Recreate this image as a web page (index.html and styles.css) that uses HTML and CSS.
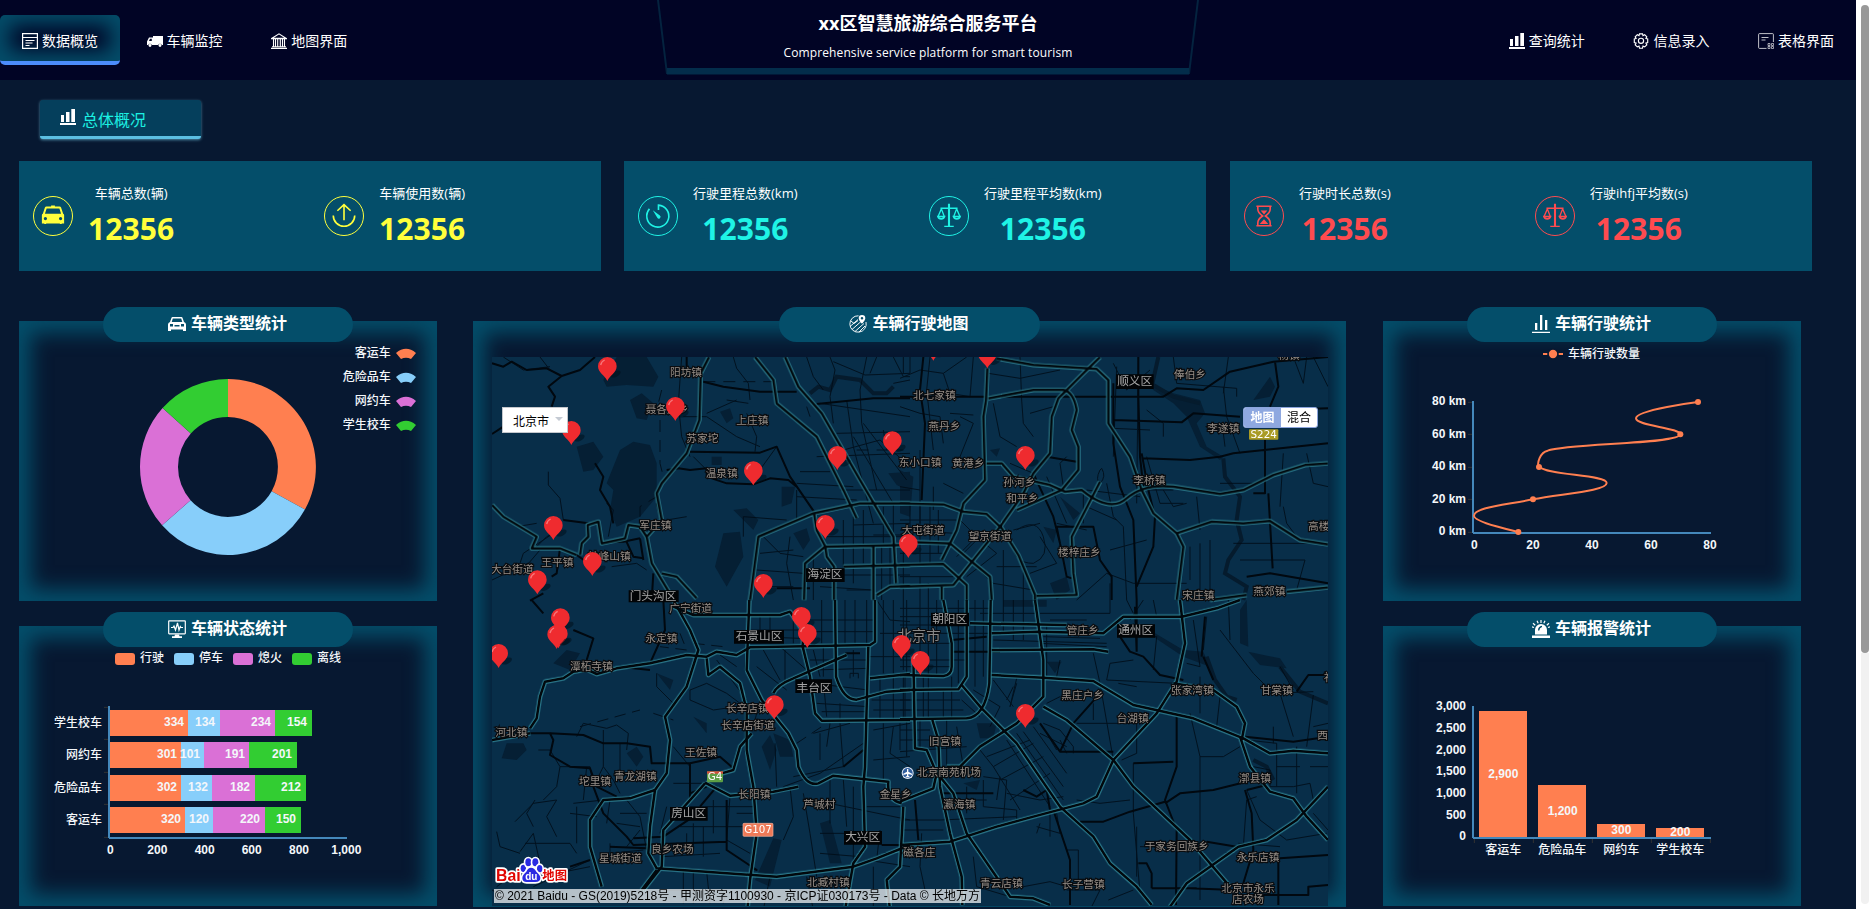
FILE: index.html
```html
<!DOCTYPE html>
<html lang="zh-CN">
<head>
<meta charset="utf-8">
<title>xx区智慧旅游综合服务平台</title>
<link rel="stylesheet" href="styles.css">
</head>
<body>
<svg class="defs" aria-hidden="true">
  <symbol id="i-bars" viewBox="0 0 16 16"><path fill="currentColor" d="M0 14h16v2H0zM1 6h3v7H1zM6 3h3.500v10H6zM11.300 0H15v13h-3.700z"/></symbol>
  <symbol id="i-doc" viewBox="0 0 16 16"><path fill="none" stroke="currentColor" stroke-width="1.200" d="M.6.600h14.800v14.800H.6zM.6 4.500h14.800M3.500 7.500h9M3.500 10h7M3.500 12.500h4"/></symbol>
  <symbol id="i-truck" viewBox="0 0 16 16"><path fill="currentColor" d="M6 3h10v9h-1.200a2 2 0 0 0-3.600 0H4.800a2 2 0 0 0-3.600 0H0V8.500L2 4.500h4zM2 8h2.800V5.700H3z" fill-rule="evenodd"/><circle cx="3" cy="12.500" r="1.400" fill="currentColor"/><circle cx="13" cy="12.500" r="1.400" fill="currentColor"/></symbol>
  <symbol id="i-museum" viewBox="0 0 16 16"><path fill="none" stroke="currentColor" stroke-width="1.100" d="M1 5.200 8 .8l7 4.400zM0 5.700h16M0 15.400h16M1 13.800h14M2.500 6v8M4.500 6v8M6.700 6v8M9.300 6v8M11.500 6v8M13.500 6v8"/></symbol>
  <symbol id="i-gear" viewBox="0 0 16 16"><g fill="none" stroke="currentColor" stroke-width="1.150"><path d="M6.500.8h3l.5 1.800 1.700-.9 2.100 2.100-.9 1.700 1.800.5v3.500l-1.800.6.9 1.700-2.100 2.100-1.700-.9-.5 2.200h-3L6 13l-1.700.9-2.100-2.100.9-1.700L1.300 9.500V6l1.800-.5-.9-1.700 2.100-2.100 1.700.9z"/><circle cx="8" cy="7.800" r="2.600"/></g></symbol>
  <symbol id="i-form" viewBox="0 0 16 16"><path fill="none" stroke="currentColor" opacity=".75" d="M8.500 15.400H1.500q-.9 0-.9-.9V1.500q0-.9.900-.9h13q.9 0 .9.900V9M3.500 4.500h7M3.500 7h4"/><path fill="none" stroke="currentColor" opacity=".6" d="M10 10.500h2v2h-2zM13.500 10.500h2v2h-2zM10 13.500h2v2h-2zM13.500 13.500h2v2h-2z"/></symbol>
  <symbol id="i-car" viewBox="0 0 18 16"><path fill="currentColor" fill-rule="evenodd" d="M4.500 1h9Q14.300 1 14.600 2L16 6q2 .6 2 2.500V15h-3v-1.500H3V15H0V8.500Q0 6.600 2 6L3.400 2Q3.700 1 4.500 1zM4.800 2.500 3.700 6h10.600l-1.100-3.500zM2 8v2.500h3V8zM13 8v2.500h3V8zM6.500 9v1.500h5V9z"/></symbol>
  <symbol id="i-monitor" viewBox="0 0 18 18"><path fill="none" stroke="currentColor" stroke-width="1.200" d="M1.200.8h15.600q.5 0 .5.500v12q0 .5-.5.500H1.200q-.5 0-.5-.5v-12q0-.5.500-.5zM3 7.500h2l1-1.500 1.500 4 2-7 1.500 7 1.300-3.500L13 7.500h2"/><path fill="currentColor" d="M7 14.500h4l.5 1.700h2.500V18H4v-1.800h2.500z"/></symbol>
  <symbol id="i-route" viewBox="0 0 18 18"><g fill="none" stroke="currentColor" stroke-width=".95"><path d="M9.500.8A8.200 8.200 0 1 0 17 7"/><path d="m2 6 3 2.500 4-3M1 11.500l8-7M3 14.500l9-8M6 16.500l9-8M10 17l6-6"/></g><path fill="currentColor" fill-rule="evenodd" d="M13 0a3.300 3.300 0 0 1 3.300 3.300C16.300 5.500 13 8.800 13 8.800S9.700 5.500 9.700 3.300A3.300 3.300 0 0 1 13 0zm0 2a1.300 1.300 0 1 0 0 2.600A1.300 1.300 0 0 0 13 2z"/></symbol>
  <symbol id="i-chart" viewBox="0 0 18 18"><path fill="currentColor" d="M0 16.800h18V18H0zM3 8h2.300v7H3zM8 0h2.300v15H8zM13 5h2.300v10H13z"/></symbol>
  <symbol id="i-siren" viewBox="0 0 18 18"><path fill="currentColor" fill-rule="evenodd" d="M0 15.500h18V18H0zM3 14.500V10a6 6 0 0 1 12 0v4.500zm3-4h1.300Q7.500 7.500 10 7V5.800Q6 6.300 6 10.500z"/><path stroke="currentColor" stroke-width="1.200" d="M9 0v3M5 .8l1.200 2.500M13 .8l-1.200 2.500M1 3.200l2.200 2M17 3.200l-2.200 2M0 6.800l2 .7M18 6.800l-2 .7"/></symbol>
  <symbol id="r-car" viewBox="0 0 40 40"><path fill="currentColor" fill-rule="evenodd" d="M13 10h5V9h4v1h5q1 0 1.500 1l2.200 6.500q1 .5 1 1.500v9h-2.500v.5h-2V28H12.800v.5h-2V28H8.300v-9q0-1 1-1.500L11.500 11Q12 10 13 10zm.3 2-1.800 5.500h17L26.700 12zM12 21a1.700 1.700 0 1 0 0 3.400A1.700 1.700 0 0 0 12 21zm16 0a1.700 1.700 0 1 0 0 3.400A1.700 1.700 0 0 0 28 21z"/></symbol>
  <symbol id="r-up" viewBox="0 0 40 40"><path fill="none" stroke="currentColor" stroke-width="1.700" d="M20 24.500V8.500M13 14.500l7-6.500 7 6.500M8.700 19.500a11.300 11.300 0 1 0 22.600 0"/></symbol>
  <symbol id="r-clock" viewBox="0 0 40 40"><path fill="none" stroke="currentColor" stroke-width="1.700" d="M11 12.500A11.600 11.600 0 1 0 20.500 8.500v5.300"/><path fill="currentColor" d="m14.500 14 7.500 5.500a1.800 1.800 0 1 1-2.700 2.300z"/></symbol>
  <symbol id="r-scale" viewBox="0 0 40 40"><g fill="none" stroke="currentColor"><path stroke-width="2.200" d="M20 7v24"/><path stroke-width="1.400" d="M11 11.800h18M15 31h10M12 12.500l-3.500 8M12 12.500l3 8M28 12.500l-3 8M28 12.500l3.500 8"/><path stroke-width="1.700" d="M8.300 20.500q.7 2.500 3.500 2.500t3.500-2.500zM24.700 20.500q.7 2.500 3.500 2.500t3.500-2.500z"/></g></symbol>
  <symbol id="r-hour" viewBox="0 0 40 40"><path fill="none" stroke="currentColor" stroke-width="1.700" d="M12 9.800h16M12 30.200h16M13.500 10v3q0 3.500 5 7-5 3.500-5 7v3M26.500 10v3q0 3.500-5 7 5 3.500 5 7v3"/><path fill="currentColor" d="M16.500 14.300h7L20 18.500zM20 23.500l4.500 5h-9z"/></symbol>
  <g id="pin"><ellipse cx="24" cy="-20" rx="17" ry="9" fill="#00101c" opacity=".55" transform="rotate(-25 24 -20)"/><path fill="#ef2b2f" d="M0 1C-7-15-28-24-28-43A28 28 0 0 1 28-43C28-24 7-15 0 1Z"/><path fill="none" stroke="#f7777a" stroke-width="4" d="M-20-47A21 21 0 0 1-8-62"/></g>
</svg>

<div class="shell">
  <main class="page">
    <header class="top">
      <nav class="nav">
        <a class="nav-item active"><svg><use href="#i-doc"/></svg>数据概览</a>
        <a class="nav-item"><svg><use href="#i-truck"/></svg>车辆监控</a>
        <a class="nav-item"><svg><use href="#i-museum"/></svg>地图界面</a>
      </nav>
      <div class="brand">
        <svg class="brand-frame" viewBox="0 0 548 80"><path class="frame-side" d="M4 0 13 74M544 0l-9 74"/><path class="frame-base" d="M13 68H535V74.500H13z"/></svg>
        <h1>xx区智慧旅游综合服务平台</h1>
        <p>Comprehensive service platform for smart tourism</p>
      </div>
      <nav class="nav right">
        <a class="nav-item"><svg><use href="#i-bars"/></svg>查询统计</a>
        <a class="nav-item"><svg><use href="#i-gear"/></svg>信息录入</a>
        <a class="nav-item"><svg><use href="#i-form"/></svg>表格界面</a>
      </nav>
    </header>

    <div class="section-tab"><svg><use href="#i-bars"/></svg>总体概况</div>

    <section class="stats">
      <div class="card yellow">
        <div class="stat"><svg class="round"><use href="#r-car"/></svg><div class="info"><span>车辆总数(辆)</span><b>12356</b></div></div>
        <div class="stat"><svg class="round"><use href="#r-up"/></svg><div class="info"><span>车辆使用数(辆)</span><b>12356</b></div></div>
      </div>
      <div class="card cyan">
        <div class="stat"><svg class="round"><use href="#r-clock"/></svg><div class="info"><span>行驶里程总数(km)</span><b>12356</b></div></div>
        <div class="stat"><svg class="round"><use href="#r-scale"/></svg><div class="info"><span>行驶里程平均数(km)</span><b>12356</b></div></div>
      </div>
      <div class="card red">
        <div class="stat"><svg class="round"><use href="#r-hour"/></svg><div class="info"><span>行驶时长总数(s)</span><b>12356</b></div></div>
        <div class="stat"><svg class="round"><use href="#r-scale"/></svg><div class="info"><span>行驶ihfj平均数(s)</span><b>12356</b></div></div>
      </div>
    </section>

    <section class="board">
      <div class="column">
        <article class="panel">
          <h2 class="pill"><svg><use href="#i-car"/></svg>车辆类型统计</h2>
          <svg class="chart" viewBox="57 93 1254 840">
            <path fill="#ff7f50" d="M684 267A264 264 0 0 1 914.800 658.600L815 603.500A150 150 0 0 0 684 381Z"/>
            <path fill="#87cefa" d="M914.800 658.600A264 264 0 0 1 486.300 705.900L571.700 630.400A150 150 0 0 0 815 603.500Z"/>
            <path fill="#da70d6" d="M486.300 705.900A264 264 0 0 1 487.800 354.300L572.500 430.600A150 150 0 0 0 571.700 630.400Z"/>
            <path fill="#32cd32" d="M487.800 354.300A264 264 0 0 1 684 267V381A150 150 0 0 0 572.500 430.600Z"/>
            <g class="end">
              <text x="1172" y="202">客运车</text><text x="1172" y="274">危险品车</text><text x="1172" y="346">网约车</text><text x="1172" y="418">学生校车</text>
            </g>
            <path fill="#ff7f50" d="M1188 189q30-25 60 0l-15 18q-15-8-30 0z"/>
            <path fill="#87cefa" d="M1188 261q30-25 60 0l-15 18q-15-8-30 0z"/>
            <path fill="#da70d6" d="M1188 333q30-25 60 0l-15 18q-15-8-30 0z"/>
            <path fill="#32cd32" d="M1188 405q30-25 60 0l-15 18q-15-8-30 0z"/>
          </svg>
        </article>
        <article class="panel">
          <h2 class="pill"><svg><use href="#i-monitor"/></svg>车辆状态统计</h2>
          <svg class="chart" viewBox="57 78 1254 840">
            <g><rect x="345" y="159" width="60" height="36" rx="9" fill="#ff7f50"/><rect x="522" y="159" width="60" height="36" rx="9" fill="#87cefa"/><rect x="699" y="159" width="60" height="36" rx="9" fill="#da70d6"/><rect x="876" y="159" width="60" height="36" rx="9" fill="#32cd32"/></g>
            <text x="420" y="187">行驶</text><text x="597" y="187">停车</text><text x="774" y="187">熄火</text><text x="951" y="187">离线</text>
            <path class="tick" d="M312 322h15M312 418h15M312 517h15M312 613h15M312 712h15"/>
            <path fill="#ff7f50" d="M330 330h234v78H330zM330 426h213v78H330zM330 525h213v78H330zM330 621h225v78H330z"/>
            <path fill="#87cefa" d="M564 330h96v78h-96zM543 426h69v78h-69zM543 525h93v78h-93zM555 621h84v78h-84z"/>
            <path fill="#da70d6" d="M660 330h165v78H660zM612 426h135v78H612zM636 525h129v78H636zM639 621h156v78H639z"/>
            <path fill="#32cd32" d="M825 330h111v78H825zM747 426h144v78H747zM765 525h153v78H765zM795 621h108v78H795z"/>
            <path class="axis" d="M327 318V714M327 714H1041"/>
            <g class="end"><text x="306" y="382">学生校车</text><text x="306" y="478">网约车</text><text x="306" y="577">危险品车</text><text x="306" y="673">客运车</text></g>
            <g class="end num"><text x="552" y="378">334</text><text x="645" y="378">134</text><text x="813" y="378">234</text><text x="921" y="378">154</text>
            <text x="531" y="474">301</text><text x="600" y="474">101</text><text x="735" y="474">191</text><text x="876" y="474">201</text>
            <text x="531" y="573">302</text><text x="624" y="573">132</text><text x="750" y="573">182</text><text x="903" y="573">212</text>
            <text x="543" y="669">320</text><text x="627" y="669">120</text><text x="780" y="669">220</text><text x="888" y="669">150</text></g>
            <g class="mid num"><text x="331" y="762">0</text><text x="472" y="762">200</text><text x="614" y="762">400</text><text x="755" y="762">600</text><text x="897" y="762">800</text><text x="1039" y="762">1,000</text></g>
          </svg>
        </article>
      </div>

      <article class="panel map-panel">
        <h2 class="pill"><svg><use href="#i-route"/></svg>车辆行驶地图</h2>
        <div class="map">
          <svg class="map-canvas" viewBox="0 0 2508 1647">
            <defs>
              <g id="highways">
                <g transform="translate(-96 -201)">
                  <path d="M747 201 722 250 718 390 680 490 605 580 590 610 605 690 560 740 575 820 620 895 642 932"/>
                  <path d="M885 201 940 270 950 340 1070 440 1150 600 1190 685M975 201 1015 290 1085 370 1200 570 1300 740 1308 880"/>
                  <path d="M96 645 130 680 230 740 215 775 300 775 350 795M360 795 365 760 385 740 383 705 415 695 425 760 495 745 505 705 540 710 560 740"/>
                  <path d="M870 930 895 740 1060 670 1200 640 1350 640M1032 930 1035 820 1095 770 1350 765M1150 830 1350 825M1240 770V930M1122 930V880M1250 915 1290 890 1350 888M605 850 650 860 710 925M1062 670 1070 720 1096 770 1100 800 1122 830V880"/>
                </g>
                <g transform="translate(1224 -201)">
                  <path d="M290 205 400 225 590 237 625 270V400L690 500 725 600 760 670 830 730 850 770 830 930"/>
                  <path d="M600 201 550 250 500 300 475 325 455 380 450 490 400 550 370 610 300 710 160 885 0 890"/>
                  <path d="M265 325 400 300 490 300Q520 305 530 360L515 420 535 470V540L485 600 350 660M262 235 258 330 250 380 255 570 190 640 170 720 125 810"/>
                  <path d="M0 640 130 643 190 665 260 672 305 715 355 795 405 915V930M0 755 150 760 215 815 270 860 275 930M0 825 130 822 200 885V930M125 930V890"/>
                  <path d="M260 520H305L340 560 450 585 495 605 545 600Q630 670 680 625T820 590L960 612 1030 600 1120 555 1215 525 1284 520"/>
                  <path d="M600 575 515 740 520 850 530 915 410 918M830 730 935 695 1030 700 1110 693 1200 750 1284 763M930 930 1040 915M1160 905 1284 892"/>
                </g>
                <g transform="translate(-96 729)">
                  <path d="M640 0 690 90 715 150 680 260 615 350 630 420 620 520 585 570 570 680 565 760 590 805 950 830 1180 800 1250 775 1350 735"/>
                  <path d="M210 385 230 355 240 290 255 245 310 235 340 215 380 208 410 222 470 205 570 190 680 165 740 170 770 155 830 165 870 142 1230 135 1245 125V0M96 420 210 400"/>
                  <path d="M640 20 700 45 960 45 990 35 1030 95 1028 140 1050 230 1065 340 1085 362 1350 360"/>
                  <path d="M868 0 860 210 905 300 985 400 1010 450 1015 500Q1040 560 1075 550L1120 527 1285 545Q1280 600 1325 610M1125 0 1128 230Q1150 300 1190 299L1280 275 1350 270"/>
                  <path d="M1225 140 1215 500 1210 560 1215 740 1180 790 1155 930M1230 235 1350 222M740 175 745 225 780 200 840 250 860 330 860 450 880 560 890 700 870 840 862 930"/>
                  <path d="M875 400 840 440 820 510 785 520M585 570 510 595 430 600 390 660 390 740 425 860M735 550 610 690 605 800 550 870M735 548 810 587 940 575 1015 560M940 280Q950 255 1000 235L1160 165M590 810 545 870M1330 620 1320 800 1280 840 1290 930"/>
                </g>
                <g transform="translate(1224 729)">
                  <path d="M840 0 855 130 830 245 770 340 640 480 590 590 550 610 400 650 290 680 150 725 0 735"/>
                  <path d="M405 0 430 180V290L350 370 240 440 180 500H140M272 0 268 250Q255 350 200 355L0 358M200 0V230L175 268 0 270M130 0 155 130V200Q155 225 130 228L0 225"/>
                  <path d="M185 255 245 325 350 430 480 620 580 710 630 790 710 860 755 915M275 225 430 233 580 243 700 315 880 355 1030 415 1110 460 1180 452 1284 460"/>
                  <path d="M430 320 500 360 640 480 700 560 870 720 990 860M580 100H610L670 50H845L950 25 1020 0M275 100 415 95 610 100M210 70 500 75M275 150 580 148 625 155"/>
                  <path d="M1020 410 1050 500 1110 575 1180 595 1220 650 1284 720M1284 560 1190 660 1100 720 1015 740 860 850 810 920M820 250 940 270 1010 320 1035 370 1025 420"/>
                  <path d="M97 360 115 420 120 560 150 700 185 830 187 915M40 170 45 445 80 450 110 520 100 565 0 605M120 530 160 580 200 700 330 890 400 895 450 915"/>
                </g>
              </g>
            </defs>
            <rect width="2508" height="1647" fill="#082e49"/>
            <g class="green">
              <g transform="translate(-96 -201)"><path d="M470 201 560 201 595 260 580 290 500 285 440 290 430 270ZM510 330 545 310 580 340 560 390 530 385ZM350 470 400 455 430 500 400 540 370 545ZM480 480 520 455 570 465 590 520 590 620 540 680 470 710 450 660 460 600 440 580ZM820 660 860 655 895 690 880 720ZM790 730 840 725 850 800 800 890 765 830ZM1000 730 1040 715 1050 750 1030 780ZM965 590h40l-10 50-30 10ZM780 365l30-10 10 30-20 15ZM755 500h30v25h-30ZM1285 550l65-5v60l-40-20Z"/></g>
              <g transform="translate(1224 -201)"><path d="M740 280 820 310 900 330 915 370 890 400 920 470 970 500 960 510 900 470 860 380 820 340 760 300ZM1060 330 1110 260 1125 290 1110 320ZM430 710 470 720 460 760ZM480 620 540 670 520 690ZM450 880 500 860 510 900 470 930ZM0 540 40 560 30 680 0 670ZM270 480 300 475 290 500Z"/></g>
              <g transform="translate(-96 729)"><path d="M280 190 320 150 360 160 330 210ZM125 475 140 430 190 430 200 450 170 480ZM500 460 530 440 550 470 530 500ZM905 440 930 405 950 450 930 510ZM940 400 990 420 1000 470 960 470ZM590 220 640 240 630 270ZM700 350 740 370 740 400ZM885 840 940 715 965 720 930 860ZM1080 670 1110 660 1145 790 1110 790Z"/></g>
              <g transform="translate(1224 729)"><path d="M740 85 850 150 910 155 930 200 850 170 760 110ZM1020 30 1040 0 1045 140 1020 130ZM1045 155 1140 175 1160 205 1080 195ZM190 550 240 540 230 570ZM230 370h60l-10 45h-40ZM440 185h45l-20 35ZM310 0h130v20H310Z"/></g>
            </g>
            <g class="water"><g transform="translate(-96 -201)"><path d="M1050 310 1075 290 1110 300 1130 260 1200 270 1240 310 1280 310 1300 290"/></g><g transform="translate(1224 -201)"><path d="M970 505 975 560 1020 620 1010 690 1025 750 985 810 975 850 1040 890 1030 930M760 285 820 320 900 340M775 201 755 290"/></g><g transform="translate(1224 729)"><path d="M920 170 945 240 980 290 1010 300M1140 200 1200 275 1284 310M1060 480 1100 500 1120 540"/></g></g>
            <g class="minor">
              <g transform="translate(-96 -201)">
                <path d="M240 201 270 240 305 258M265 545 265 585 300 625 310 690M665 201 655 340 665 440 690 500M820 201 830 235 865 280 870 330M860 370 890 440 885 485M800 330 865 340M740 370 830 330M1350 270 1300 280M1040 350 1050 380M950 470 885 560M620 690 680 680M670 380 740 380 830 440 900 470M700 500 740 540M1110 201 1125 240 1110 320 1120 400M1040 201 1060 260 1090 300M1220 201 1200 300 1205 400 1250 600M1160 330 1180 470 1240 700M1300 201 1330 260 1350 260M1080 340 1350 380M1130 430 1350 425M1070 500 1350 490M1010 580 1180 590M1010 620 1190 630M1020 545 1110 545M1010 690 1010 600M980 690 850 680 850 740M910 740 960 790 1030 800M900 790 1000 780M890 840 1030 850M905 890 1000 890M990 740 980 820 1000 930M1210 400 1340 570M1180 440 1300 640M1150 480 1260 450 1350 530M1270 420 1280 480M1250 201 1230 250M1140 600 1350 600M1300 640V760M1270 650V760M1210 660V820M1180 680V880M1150 690V840M1350 700 1180 705M1350 735 1240 735M1100 740 1350 740M1060 800V930M1080 890 1240 900M1140 855H1240M1265 770V930M1290 770V890M1330 780V930M1350 855H1240M1160 900H1240M130 201 190 240 270 230M170 710 230 700M230 770 260 740 300 720M180 820 190 790 280 730M96 870 160 840M445 740 460 660 440 640M455 830 530 820 560 840M180 850 240 780M1350 201V250L1215 255 1120 215M1330 201V250"/>
                <path d="M600 390V520L610 560M605 300 595 340M730 275H960M1190 480H1330M540 680V650L590 620" stroke-dasharray="36 24"/>
              </g>
              <g transform="translate(1224 -201)">
                <path d="M0 265 60 240 130 250 200 201M90 201 80 300 100 480M130 250 150 310 210 320 220 201M0 350 60 370 120 380 130 460M150 370 220 375M265 250 360 265 480 240M360 201 365 330 370 400 400 440M460 350 390 370M280 340 300 440 350 470M450 500 400 550 330 520M640 220 680 300 750 240M650 230 640 500M715 201 710 640M750 420 640 415M790 440 790 400 740 360M820 201 830 280M830 280 1010 295 1010 320M985 201 970 310M970 290 980 380 1020 490M1180 201 1210 280 1220 201M1240 201 1284 290M1220 490 1240 580 1284 590M1150 490 1140 650M970 430 975 470M1150 650 1160 700 1190 740M860 640 820 650 790 600M740 500 780 640 850 640M740 600H820M960 580 1060 580M890 620 900 720M900 760 900 930M1000 760 1284 760M870 770V870M930 750V930M1020 810 1215 810 1190 900M620 580 640 680 670 710 680 930M560 650 650 690M550 600V700M630 780 740 750M500 500 480 520 490 590M560 600 720 620M600 540q-15 30 0 40q20-20 5-45ZM180 380 220 400 180 500M130 580 190 610M100 590V660M60 480V700M0 590 60 600M0 690 170 690M0 720 165 730M30 640V760M60 640V820M90 650V820M115 660V790M0 790H130M60 860V930M0 860H160M85 880V930M180 690 230 740 170 800M230 740 290 790 200 860M190 790 250 730M170 780 280 880M350 720q60-40 80 20t-30 80q-60 0-60-60M280 880 400 900M290 830 410 830M310 780V930M370 820V930M340 720 420 700M420 740 470 820 390 850M440 560 500 700M470 700 560 720M530 930 620 850 700 880H860M630 880V930"/>
              </g>
              <g transform="translate(-96 729)">
                <path d="M235 450 270 450 300 500 290 560 250 600M300 500 390 500 400 560M165 665 220 610 290 600M195 730H330L350 760M110 695 120 740 180 760M180 755 220 700 240 790M430 390 430 500 460 540 480 580M350 410 370 370 440 385 470 375 505 400 500 450M430 500 400 560M480 430V510M340 610 430 600M350 620V730M290 600 260 650 290 710M225 600 200 640 220 680M330 640 410 650M500 600 540 650 560 750M640 550 740 550M620 620 600 700M590 220V260L640 310M690 270 740 250 800 280 840 310M690 270V300L760 330 830 320M640 440 690 500M690 620 880 620M810 590 800 720 870 760M660 680 850 680M680 700V750M700 670V760M730 680V770M610 770 780 760M760 600V700M830 640H880M770 180 860 300M780 165 830 200M900 300 880 380M890 200 980 270M910 150 960 240M870 90H1025M880 110 1020 115M900 50V130M930 45V130M975 150V250M1000 60V130M960 140 1040 210M1060 150 1080 230M1090 240 1100 350M1050 60H1245M1050 95H1245M1050 180H1230M1060 210 1225 205M1060 250 1225 270M1070 310 1225 320M1085 335 1225 335M1155 0V130M1185 0V130M1085 0V130M1220 0V130M1090 140V230M1180 150V230M1140 310V360M1170 235V220H1195V235M1110 370 1100 440M1060 400 1170 370M1140 370 1150 500 1000 530M1080 400V480M1210 430 1080 520 970 560M1240 390 1350 370M1270 370V550M1300 380 1290 460 1350 500M1320 370V450M1240 480 1350 470M1180 560V790M1150 540 1160 680M1110 540V670M1220 620H1320M1060 600 1350 660M1030 580 1050 700 1070 830M990 560 1000 650 970 720M945 430 950 560M1080 700H1210M1080 760 1200 770M1220 780 1350 800M1240 800V930M1260 690 1250 780M1040 830 1060 930M930 830 910 930M610 870 800 870 790 910M670 810V910M700 815V910M740 815 750 910M370 600 380 500M450 730 450 760 550 750M450 600 440 670M220 860 390 780M96 870 150 900M110 860 180 810M390 800 240 830M540 690 500 740M480 640 560 640M470 670 540 680M1225 170H1350M1250 0 1290 60 1350 65M1260 100H1350M1270 0V220M1300 0V220M1330 0V210M1235 300H1350M1240 330H1350M1260 235V360M1300 230V360M1330 220V360"/>
                <path d="M360 380 540 330M580 340 640 360M660 100 680 150 600 140M1010 430 1100 370M700 130 790 140" stroke-dasharray="34 20"/>
              </g>
              <g transform="translate(1224 729)">
                <path d="M0 25H270M0 50H200M0 75H130M0 100H270M0 130H155M0 180H200M0 200H150M20 0V225M60 0V225M85 0V360M110 0V225M175 0V250M225 0V260M250 0V230M15 225V360M70 230V360M155 230V355M130 270V355M0 300H180M0 330H190M0 390H90M0 420H100M60 360V450M20 360V470M140 360V500M170 380 190 500M0 455 200 440M185 300 240 350M220 270 300 320 270 380M280 240 340 320M330 320 350 250M350 235 330 320M240 40H405M280 70H405M310 0V100M340 0V120M370 0V120M280 120 620 130M420 40H630V0M450 60 560 60M430 110 600 115M420 130 620 140M440 70V230M470 230 480 180M580 160 600 250 640 480M620 240 630 190 700 180M620 240 830 250M700 70 680 110 770 110 760 210M680 0 700 40M730 0 690 60M760 0 770 50M880 60 900 200 860 190M920 50 910 150M985 0 990 120M960 90 1060 220 1120 280 1240 275M1140 200 1180 270M1140 280 1180 410M1240 285 1220 440M1040 420 1130 430V560M1190 440V580M1130 500H1200M1060 500 1110 510 1110 560H1180L1230 550 1240 600M1040 570 1080 660 1160 720 1280 700M900 470 970 470 1020 440M900 470V900M900 470 870 340M900 230V340M710 360V460L665 480M655 250 710 260M530 370H690M690 600 600 610 530 600M700 490V640L720 880M710 680V830M720 740 870 740M1015 730 1140 740M240 450 280 500 360 630M260 470 390 420M280 500 400 430M300 540 430 470M330 600 450 520M350 400 490 600M370 395 490 560M400 380 500 520M320 420 450 620M250 530 320 540 310 660M250 540V620L350 630M300 530 290 600M350 630V670M320 580 420 600 490 590M420 400 500 440M430 370 480 390 520 440V460M480 420 500 460M0 660 120 660 350 650M0 690 130 690M200 560V640M220 600H260M65 700 60 800 75 870M220 770 230 860 330 890M500 750H535V850M600 870 500 870M600 870 570 930M410 680 480 700 470 640M420 670 410 700M450 640V710M370 860 450 845 500 860M625 900 700 870M1070 590 1040 600 1030 740M1284 690 1240 640M1230 500 1284 500M1120 430V380M1240 380 1284 370M950 380 960 290M580 310V360M440 400 470 450M480 290 440 310M320 300 340 260"/>
              </g>
            </g>
            <g class="major">
              <g transform="translate(-96 -201)">
                <path d="M96 220 130 230 155 215 200 240 260 235 305 258 360 240 405 201M305 258 265 290 285 320 275 350M96 432 130 410M730 275 790 290 900 305 1010 305M690 485 900 488 950 470 990 560 1062 665M655 535 690 540 740 535 740 560 800 580 880 583 930 565 985 570 1010 590M1070 342 1240 325 1350 325M310 690 385 700M430 755 490 755 540 745M405 520 430 560 420 600 450 650 460 700M540 745 550 810M495 745 520 800 550 805M605 690 560 720M680 201V235M605 690 590 640M620 540 660 535M110 201M300 775 290 850 275 860M350 795 400 830 420 800M580 850 575 932M210 932 250 910M950 895H1050"/>
              </g>
              <g transform="translate(1224 -201)">
                <path d="M70 201 60 300 75 400 65 630M0 320H640M640 320H790L830 295 910 300 990 245 1120 215 1284 201M715 201V320L720 500 730 590M640 280V460L660 590 700 690 710 930M730 505 870 510 960 500 1000 490 1284 460M640 390 845 397 880 370 1020 380M1284 355 1130 360M1125 215 1135 290 1110 350M1095 450V610L1060 610M1105 610 1118 835M725 490 745 600 765 680 760 770 710 890M635 930V860L600 810 580 710 470 710M470 710 500 860 515 865M440 500 530 515M400 550 460 680 480 760M1040 860 1110 850 1284 880"/>
              </g>
              <g transform="translate(-96 729)">
                <path d="M210 400 270 400 280 420 270 465 330 500 390 505 410 560 470 590M270 400 370 405 430 430 500 430 570 440 575 490 690 490 780 470 820 505M690 490V600M400 560 430 640 500 710 520 735 800 725M520 715 610 710 700 650M800 600V750L890 810 870 800M690 580 740 560M610 0 615 90 570 190M480 200 570 210M330 800 390 780M450 740 560 745M735 550 770 560 720 620M340 90 400 115 380 180M215 0 250 40M1350 735 1265 735M1150 500 1210 450M1155 160 1200 160"/>
              </g>
              <g transform="translate(1224 729)">
                <path d="M660 110 690 155 730 170 780 225 850 240M710 155V0M910 170 940 240M830 350V500L795 600 830 690 828 915M710 155 705 20M915 50 905 170M795 610 840 580 940 570 1040 545M690 635 795 605M540 665 610 665 690 635M480 455H640M520 370 480 455 420 370M600 280 520 370M460 630 480 690 510 780V915M370 570 410 590 440 570 450 630M1035 410 1180 425 1284 410M1190 275 1225 225 1284 225M700 490 820 485M1035 570 1055 640 1060 750 1030 850M870 865 1000 870M755 865 755 820 740 790 715 790M755 865H890M1010 740 920 725M1140 775 1284 765M1135 775V915M1020 885 1225 885V860L1284 855M45 600 55 720M120 580 280 580M155 120 260 110M155 155H300M1040 570 1100 555"/>
              </g>
            </g>
            <use href="#highways" class="casing"/>
            <use href="#highways" class="core"/>

            <g class="label-boxes"><path d="M942 634h116v41H942zM410 700h150v36H410zM726 819h150v41H726zM910 967h110v41H910zM534 1350h113v41H534zM1056 1422h114v41H1056zM1872 52h113v44h-113zM1317 767h114v41h-114zM1875 802h114v40h-114z"/></g>
            <g class="towns">
              <g transform="translate(-96 -201)"><text x="678" y="257">阳坊镇</text><text x="621" y="369">聂各庄乡</text><text x="877" y="401">上庄镇</text><text x="727" y="455">苏家坨</text><text x="785" y="560">温泉镇</text><text x="586" y="716">军庄镇</text><text x="292" y="827">王平镇</text><text x="448" y="809">妙峰山镇</text><text x="157" y="848">大台街道</text></g>
              <g transform="translate(1224 -201)"><text x="103" y="326">北七家镇</text><text x="133" y="421">燕丹乡</text><text x="60" y="527">东小口镇</text><text x="205" y="532">黄港乡</text><text x="870" y="264">俸伯乡</text><text x="970" y="427">李遂镇</text><text x="358" y="587">孙河乡</text><text x="367" y="637">和平乡</text><text x="748" y="581">李桥镇</text><text x="69" y="731">大屯街道</text><text x="270" y="749">望京街道</text><text x="538" y="799">楼梓庄乡</text><text x="895" y="927">宋庄镇</text><text x="1108" y="916">燕郊镇</text><text x="1272" y="719">高楼镇</text><text x="1167" y="208">杨镇</text></g>
              <g transform="translate(-96 729)"><text x="692" y="37">广宁街道</text><text x="604" y="125">永定镇</text><text x="394" y="209">潭柘寺镇</text><text x="154" y="407">河北镇</text><text x="862" y="336">长辛店镇</text><text x="864" y="386">长辛店街道</text><text x="723" y="467">王佐镇</text><text x="405" y="554">坨里镇</text><text x="526" y="541">青龙湖镇</text><text x="883" y="593">长阳镇</text><text x="1078" y="623">芦城村</text><text x="1307" y="593">金星乡</text><text x="637" y="760">良乡农场</text><text x="481" y="785">星城街道</text><text x="1105" y="857">北臧村镇</text></g>
              <g transform="translate(1224 729)"><text x="548" y="102">管庄乡</text><text x="548" y="296">黑庄户乡</text><text x="877" y="281">张家湾镇</text><text x="1130" y="281">甘棠镇</text><text x="698" y="365">台湖镇</text><text x="135" y="434">旧宫镇</text><text x="147" y="527">北京南苑机场</text><text x="178" y="623">瀛海镇</text><text x="58" y="767">磁各庄</text><text x="304" y="861">青云店镇</text><text x="550" y="863">长子营镇</text><text x="830" y="749">于家务回族乡</text><text x="1065" y="547">漷县镇</text><text x="1074" y="782">永乐店镇</text><text x="1044" y="875">北京市永乐</text><text x="1044" y="909">店农场</text><text x="1300" y="416">西集镇</text><text x="1319" y="244">祁各庄</text></g>
            </g>
            <g class="districts"><text x="999" y="664">海淀区</text><text x="483" y="728">门头沟区</text><text x="801" y="849">石景山区</text><text x="966" y="1005">丰台区</text><text x="590" y="1380">房山区</text><text x="1112" y="1453">大兴区</text><text x="1928" y="84">顺义区</text><text x="1373" y="798">朝阳区</text><text x="1931" y="832">通州区</text><text class="city" x="1281" y="851">北京市</text></g>
            <g class="roads-no"><rect x="645" y="1243" width="48" height="33" rx="3" fill="#5d9f45"/><path fill="#d84b3e" d="M645 1243h48v7h-48z"/><text x="669" y="1270">G4</text><rect x="753" y="1399" width="90" height="39" rx="3" fill="#ee7a58" stroke="#f7b49e" stroke-width="2"/><text x="798" y="1428">G107</text><rect x="2271" y="217" width="88" height="31" rx="3" fill="#a99b24"/><text x="2315" y="243">S224</text></g>
            <g transform="translate(1247 1248)"><circle r="18" fill="#e8eefa"/><circle r="15" fill="#315f9e"/><path fill="#fff" d="M-2-12h4v8l11 6v4L2 3v5l4 3v2H-6v-2l4-3V3l-11 3V2l11-6z"/></g>
            <g transform="translate(-96 -201)"><use href="#pin" x="442" y="272"/><use href="#pin" x="646" y="392"/><use href="#pin" x="334" y="464"/><use href="#pin" x="880" y="585"/><use href="#pin" x="1132" y="539"/><use href="#pin" x="1297" y="495"/><use href="#pin" x="280" y="749"/><use href="#pin" x="397" y="857"/><use href="#pin" x="232" y="912"/><use href="#pin" x="910" y="923"/><use href="#pin" x="1096" y="746"/></g>
            <g transform="translate(1224 -201)"><use href="#pin" x="100" y="211"/><use href="#pin" x="262" y="234"/><use href="#pin" x="376" y="539"/><use href="#pin" x="25" y="803"/></g>
            <g transform="translate(-96 729)"><use href="#pin" x="301" y="96"/><use href="#pin" x="295" y="144"/><use href="#pin" x="290" y="146"/><use href="#pin" x="116" y="203"/><use href="#pin" x="1024" y="92"/><use href="#pin" x="1042" y="143"/><use href="#pin" x="943" y="357"/><use href="#pin" x="1324" y="176"/></g>
            <g transform="translate(1224 729)"><use href="#pin" x="61" y="224"/><use href="#pin" x="376" y="383"/></g>
            <g class="baidu" transform="translate(-96 729)">
              <g stroke="#fff" stroke-width="10" stroke-linejoin="round" paint-order="stroke">
                <text x="108" y="843" class="bai" textLength="74">Bai</text><text x="247" y="840" class="ditu" textLength="74">地图</text>
                <g fill="#2a2be2"><ellipse cx="190" cy="805" rx="8" ry="11"/><ellipse cx="205" cy="787" rx="9" ry="12"/><ellipse cx="226" cy="787" rx="9" ry="12"/><ellipse cx="239" cy="806" rx="8" ry="11"/><path d="M213 803q10 0 16 12 12 10 12 19 0 12-15 12h-26q-13 0-13-12 0-9 12-19 5-12 14-12z"/></g>
              </g>
              <text x="214" y="840" class="du">du</text>
            </g>
          </svg>
          <div class="city-select">北京市<i></i></div>
          <div class="map-type"><b>地图</b><span>混合</span></div>
          <div class="copyright">© 2021 Baidu - GS(2019)5218号 - 甲测资字1100930 - 京ICP证030173号 - Data © 长地万方</div>
        </div>
      </article>

      <div class="column">
        <article class="panel">
          <h2 class="pill"><svg><use href="#i-chart"/></svg>车辆行驶统计</h2>
          <svg class="chart" viewBox="69 93 1254 840">
            <path d="M549 192h60" stroke="#ff7f50" stroke-width="6"/><circle cx="579" cy="192" r="15" fill="#ff7f50" stroke="#071831" stroke-width="5"/>
            <text x="624" y="203">车辆行驶数量</text>
            <path class="tick" d="M324 337h15M324 433h15M324 532h15M324 628h15M324 727h15"/>
            <path class="axis" d="M339 333V729M339 729H1053"/>
            <path fill="none" stroke="#ff7f50" stroke-width="6" d="M475 726C475 726 342 697 342 677C342 653 430 646 519 628C607 611 740 603 740 579C740 554 560 556 537 530C530 522 540 486 563 482C620 460 961 462 961 433C961 413 828 408 828 385C828 359 1014 336 1014 336"/>
            <g fill="#ff7f50"><circle cx="475" cy="726" r="9"/><circle cx="519" cy="628" r="9"/><circle cx="537" cy="531" r="9"/><circle cx="961" cy="433" r="9"/><circle cx="1014" cy="336" r="9"/></g>
            <g class="end num"><text x="318" y="345">80 km</text><text x="318" y="444">60 km</text><text x="318" y="540">40 km</text><text x="318" y="639">20 km</text><text x="318" y="735">0 km</text></g>
            <g class="mid num"><text x="343" y="777">0</text><text x="519" y="777">20</text><text x="696" y="777">40</text><text x="873" y="777">60</text><text x="1050" y="777">80</text></g>
          </svg>
        </article>
        <article class="panel">
          <h2 class="pill"><svg><use href="#i-siren"/></svg>车辆报警统计</h2>
          <svg class="chart" viewBox="69 78 1254 840">
            <path fill="#ff7f50" d="M357 333h144v381H357zM534 555h144v159H534zM711 672h144v42H711zM888 684h144v30H888z"/>
            <path class="tick" d="M343 714v15M520 714v15M697 714v15M874 714v15M1051 714v15"/>
            <path class="axis" d="M339 318V714M339 714H1053"/>
            <g class="end num"><text x="318" y="330">3,000</text><text x="318" y="396">2,500</text><text x="318" y="462">2,000</text><text x="318" y="525">1,500</text><text x="318" y="591">1,000</text><text x="318" y="657">500</text><text x="318" y="720">0</text></g>
            <g class="mid num"><text x="430" y="534">2,900</text><text x="608" y="645">1,200</text><text x="784" y="702">300</text><text x="961" y="708">200</text></g>
            <g class="mid"><text x="430" y="762">客运车</text><text x="607" y="762">危险品车</text><text x="784" y="762">网约车</text><text x="961" y="762">学生校车</text></g>
          </svg>
        </article>
      </div>
    </section>
  </main>
  <aside class="scroll"><div class="thumb"></div></aside>
</div>
</body>
</html>
```
FILE: styles.css
```css
* { box-sizing: border-box; }
html, body { height: 100%; overflow: hidden; }
body { margin: 0; background: #fff; color: #fff; font-family: "Open Sans", "Noto Sans CJK SC", sans-serif; }
.defs { position: absolute; width: 0; height: 0; }
.shell { display: flex; height: 909px; }
.page { width: 1856px; height: 909px; overflow: hidden; background: #071831; }

/* header */
.top { display: flex; justify-content: space-between; height: 80px; background: #010425; }
.nav { display: flex; gap: 4.600px; width: 654px; padding-top: 15px; }
.nav.right { justify-content: flex-end; }
.nav-item { display: flex; align-items: center; justify-content: center; gap: 4px; width: 120px; height: 50px; padding-top: 5px; border-bottom: 4px solid transparent; border-radius: 5px; font-size: 14px; line-height: 20px; white-space: nowrap; }
.nav-item svg { width: 16px; height: 16px; margin-top: 1px; }
.nav-item.active { border-bottom-color: #4c8dfb; background: #010425; box-shadow: inset 0 0 20px 10px #044e6a; }
.brand { position: relative; width: 548px; height: 80px; text-align: center; }
.brand-frame { position: absolute; inset: 0; width: 548px; height: 80px; }
.frame-side { fill: none; stroke: #04233f; stroke-width: 2; }
.frame-base { fill: #032d4b; }
.brand h1 { margin: 10px 0 0; font-size: 18px; line-height: 26px; }
.brand p { margin: 7px 0 0; font-size: 12px; line-height: 20px; letter-spacing: .12px; }

.section-tab { display: flex; align-items: center; gap: 6px; width: 161px; height: 39px; margin: 20px 0 0 40px; padding: 2px 0 0 20px; border-bottom: 3px solid #5bbfe2; border-radius: 3px; background: #053f5c; box-shadow: 0 1px 3px #4d8ba6; color: #1cf0e2; font-size: 16px; }
.section-tab svg { width: 16px; height: 16px; margin-top: -4px; color: #fff; }

/* totals */
.stats { display: flex; gap: 23px; margin: 22px 0 0 19px; }
.card { display: grid; grid-template-columns: 291px 291px; width: 582px; height: 110px; background: #044e6a; }
.card.red { margin-left: 1px; }
.stat { display: flex; gap: 15px; padding: 20px 0 0 14px; }
.round { width: 40px; height: 40px; margin-top: 15px; border: 1px solid currentColor; border-radius: 50%; }
.info { display: flex; flex-direction: column; align-items: center; }
.info span { color: #fff; font-size: 13px; line-height: 25px; white-space: nowrap; }
.info b { font-size: 30px; line-height: 42px; margin-top: 2px; letter-spacing: .1px; }
.yellow { color: #ffff3c; }
.cyan { color: #1ff3e5; }
.red { color: #ff4b4f; }

/* panels */
.board { display: flex; width: 1782px; margin: 50px 0 0 19px; }
.column { display: flex; flex-direction: column; gap: 25px; width: 418px; }
.panel { position: relative; height: 280px; box-shadow: inset 0 0 20px 12px #044e6a; }
.map-panel { width: 873px; height: 586px; margin: 0 37px 0 36px; }
.pill { position: absolute; top: -14px; left: 84px; z-index: 2; display: flex; align-items: center; justify-content: center; gap: 5px; width: 250px; height: 35px; margin: 0; padding-right: 1px; border-radius: 18px; background: #044e6a; font-size: 16px; line-height: 33px; padding-bottom: 2px; }
.pill svg { width: 18px; height: 18px; margin-top: 1px; }
.map-panel .pill { left: 306px; width: 261px; }
.chart { display: block; width: 418px; height: 280px; }
.chart text { fill: #f4f7fa; font: 500 36px "Liberation Sans", "Noto Sans CJK SC", sans-serif; }
.chart .num text { font-weight: bold; }
.end { text-anchor: end; }
.mid { text-anchor: middle; }
.axis { fill: none; stroke: #4488bb; stroke-width: 6; }
.tick { stroke: #333; stroke-width: 3; }

/* map */
.map { position: relative; width: 836px; height: 549px; margin: 0 0 0 19px; top: 36px; overflow: hidden; }
.map-canvas { display: block; width: 836px; height: 549px; }
.minor { fill: none; stroke: #020d18; stroke-width: 3; opacity: .85; }
.major { fill: none; stroke: #01080f; stroke-width: 6; stroke-linejoin: round; }
.casing { fill: none; stroke: #33899a; stroke-width: 13; stroke-linejoin: round; }
.core { fill: none; stroke: #01080d; stroke-width: 7.500; stroke-linejoin: round; }
.green { fill: #051f34; }
.water { fill: none; stroke: #051b2d; stroke-width: 12; }
.towns text, .districts text { font: 32px "Noto Sans CJK SC", sans-serif; fill: #968f88; text-anchor: middle; stroke: #0a0c0f; stroke-width: 7; paint-order: stroke; }
.districts text { font-size: 35px; fill: #a5a5a5; stroke-width: 2; }
.districts .city { font-size: 43px; fill: #888; stroke-width: 6; }
.label-boxes { fill: #020406; }
.roads-no text { font: 31px "DejaVu Sans", sans-serif; fill: #fff; text-anchor: middle; }
.baidu .bai { font: bold 48px "Liberation Sans", sans-serif; fill: #e10602; }
.baidu .ditu { font: bold 37px "Noto Sans CJK SC", sans-serif; fill: #e10602; }
.baidu .du { font: bold 30px "Liberation Sans", sans-serif; fill: #fff; text-anchor: middle; }
.city-select { position: absolute; top: 50px; left: 10px; display: flex; align-items: center; gap: 6px; width: 66px; height: 26px; padding-left: 10px; border: 1px solid #c4c7cc; background: #fff; color: #000; font: 12px "Noto Sans CJK SC", sans-serif; }
.city-select i { border: 4px solid transparent; border-top-color: #c4cad3; border-bottom: 0; margin-top: -2px; }
.map-type { position: absolute; top: 50px; right: 10px; display: flex; height: 21px; border: 1px solid #8ba4dc; border-radius: 3px; overflow: hidden; background: #fff; color: #000; font: 12px/18px "Noto Sans CJK SC", sans-serif; }
.map-type b { width: 37px; background: #8ea8e0; color: #fff; text-align: center; }
.map-type span { width: 36px; text-align: center; }
.copyright { position: absolute; left: 2px; bottom: 3px; width: 487px; height: 14px; padding-left: 1px; background: rgba(255,255,255,.7); color: #000; font: 12px/14px "Liberation Sans", "Noto Sans CJK SC", sans-serif; white-space: nowrap; overflow: hidden; }

.scroll { width: 16px; height: 909px; padding: 5px 0 5px 5px; background: #fff; }
.thumb { width: 8px; height: 648px; border-radius: 4px; background: #999; }
.scroll::after { content: ""; display: block; width: 8px; height: 251px; background: #f1f1f1; border-radius: 0 0 4px 4px; }
```
